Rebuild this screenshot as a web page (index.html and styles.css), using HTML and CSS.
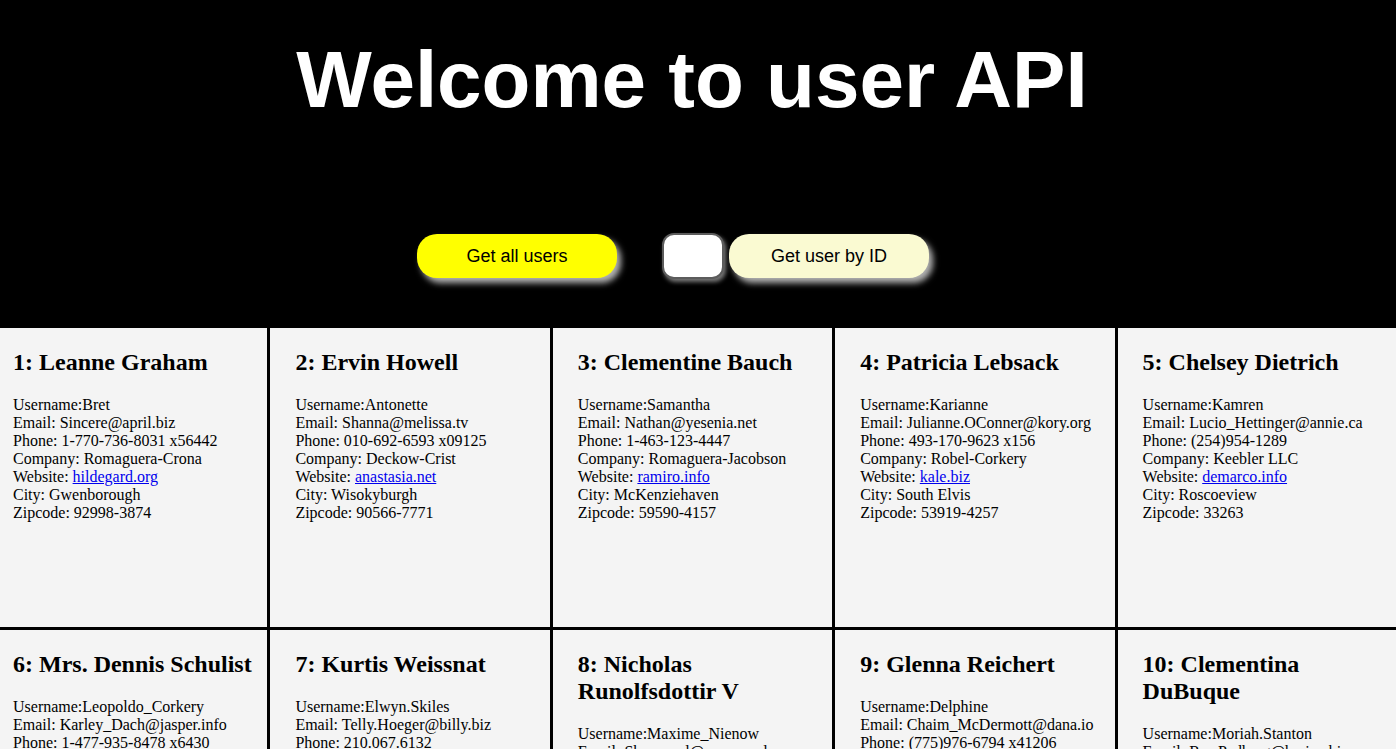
FILE: index.html
```html
<!DOCTYPE html>
<html lang="en">
<head>
<meta charset="utf-8">
<title>User API</title>
<link rel="stylesheet" href="styles.css">
</head>
<body>
<header class="hero">
  <h1 class="hero-title">Welcome to user API</h1>
  <div class="controls">
    <button class="btn btn-all">Get all users</button>
    <div class="by-id">
      <input class="id-input" type="text">
      <button class="btn btn-id">Get user by ID</button>
    </div>
  </div>
</header>
<main class="cards">
  <article class="card"><h2>1: Leanne Graham</h2><p>Username:Bret<br>Email: Sincere@april.biz<br>Phone: 1-770-736-8031 x56442<br>Company: Romaguera-Crona<br>Website: <a href="#">hildegard.org</a><br>City: Gwenborough<br>Zipcode: 92998-3874</p></article>
  <article class="card"><h2>2: Ervin Howell</h2><p>Username:Antonette<br>Email: Shanna@melissa.tv<br>Phone: 010-692-6593 x09125<br>Company: Deckow-Crist<br>Website: <a href="#">anastasia.net</a><br>City: Wisokyburgh<br>Zipcode: 90566-7771</p></article>
  <article class="card"><h2>3: Clementine Bauch</h2><p>Username:Samantha<br>Email: Nathan@yesenia.net<br>Phone: 1-463-123-4447<br>Company: Romaguera-Jacobson<br>Website: <a href="#">ramiro.info</a><br>City: McKenziehaven<br>Zipcode: 59590-4157</p></article>
  <article class="card"><h2>4: Patricia Lebsack</h2><p>Username:Karianne<br>Email: Julianne.OConner@kory.org<br>Phone: 493-170-9623 x156<br>Company: Robel-Corkery<br>Website: <a href="#">kale.biz</a><br>City: South Elvis<br>Zipcode: 53919-4257</p></article>
  <article class="card"><h2>5: Chelsey Dietrich</h2><p>Username:Kamren<br>Email: Lucio_Hettinger@annie.ca<br>Phone: (254)954-1289<br>Company: Keebler LLC<br>Website: <a href="#">demarco.info</a><br>City: Roscoeview<br>Zipcode: 33263</p></article>
  <article class="card"><h2>6: Mrs. Dennis Schulist</h2><p>Username:Leopoldo_Corkery<br>Email: Karley_Dach@jasper.info<br>Phone: 1-477-935-8478 x6430<br>Company: Considine-Lockman<br>Website: <a href="#">ola.org</a><br>City: South Christy<br>Zipcode: 23505-1337</p></article>
  <article class="card"><h2>7: Kurtis Weissnat</h2><p>Username:Elwyn.Skiles<br>Email: Telly.Hoeger@billy.biz<br>Phone: 210.067.6132<br>Company: Johns Group<br>Website: <a href="#">elvis.io</a><br>City: Howemouth<br>Zipcode: 58804-1099</p></article>
  <article class="card"><h2>8: Nicholas Runolfsdottir V</h2><p>Username:Maxime_Nienow<br>Email: Sherwood@rosamond.me<br>Phone: 586.493.6943 x140<br>Company: Abernathy Group<br>Website: <a href="#">jacynthe.com</a><br>City: Aliyaview<br>Zipcode: 45169</p></article>
  <article class="card"><h2>9: Glenna Reichert</h2><p>Username:Delphine<br>Email: Chaim_McDermott@dana.io<br>Phone: (775)976-6794 x41206<br>Company: Yost and Sons<br>Website: <a href="#">conrad.com</a><br>City: Bartholomebury<br>Zipcode: 76495-3109</p></article>
  <article class="card"><h2>10: Clementina DuBuque</h2><p>Username:Moriah.Stanton<br>Email: Rey.Padberg@karina.biz<br>Phone: 024-648-3804<br>Company: Hoeger LLC<br>Website: <a href="#">ambrose.net</a><br>City: Lebsackbury<br>Zipcode: 31428-2261</p></article>
</main>
</body>
</html>
```

FILE: styles.css
```css
html {
  scrollbar-width: none;
}
html::-webkit-scrollbar {
  display: none;
}
body {
  margin: 0;
  font-family: "Liberation Serif", "Times New Roman", serif;
  font-size: 16px;
  color: #000;
  background: #f4f4f4;
  overflow-x: hidden;
}

.hero {
  background: #000;
  height: 328px;
  box-sizing: border-box;
  padding-top: 34px;
}
.hero-title {
  margin: 0;
  padding-right: 12px;
  text-align: center;
  color: #fff;
  font-family: "Liberation Sans", Arial, Helvetica, sans-serif;
  font-weight: bold;
  font-size: 80px;
  line-height: 92px;
}

.controls {
  margin-top: 107px;
  display: flex;
  justify-content: center;
  align-items: center;
  padding-right: 50px;
  gap: 45px;
}
.by-id {
  display: flex;
  align-items: center;
  gap: 5px;
}
.btn {
  width: 200px;
  height: 44px;
  border: none;
  border-radius: 20px;
  font-family: "Liberation Sans", Arial, Helvetica, sans-serif;
  font-size: 18px;
  color: #000;
  box-shadow: 4px 5px 6px rgba(210, 210, 210, 0.85);
  cursor: pointer;
}
.btn-all {
  background: #ffff00;
}
.btn-id {
  background: #fafad2;
}
.id-input {
  box-sizing: border-box;
  width: 62px;
  height: 46px;
  border: 2px solid #5c5c5c;
  border-radius: 12px;
  background: #fff;
  box-shadow: 2px 3px 4px rgba(200, 200, 200, 0.6);
}

.cards {
  display: grid;
  grid-template-columns: repeat(5, 1fr);
  grid-auto-rows: 299px;
  gap: 3px;
  background: #000;
  width: calc(100% + 13px);
  margin-left: -12px;
}
.card {
  background: #f4f4f4;
  padding: 0 10px 0 25px;
  overflow: hidden;
}
.card h2 {
  font-size: 24px;
  font-weight: bold;
  margin: 21px 0 19.92px;
}
.card p {
  margin: 16px 0;
  line-height: 18px;
}
.card a {
  color: #0000ee;
}
```
